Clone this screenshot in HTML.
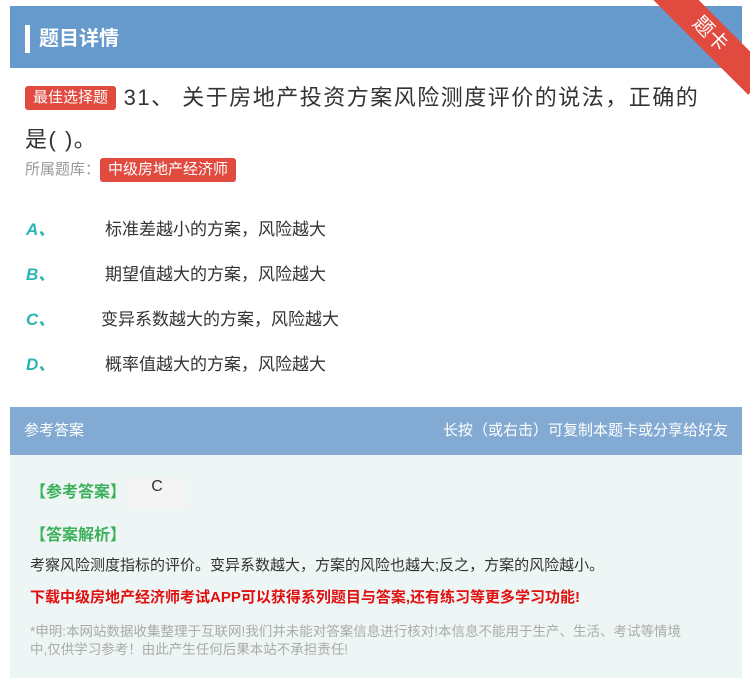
<!DOCTYPE html>
<html><head><meta charset="utf-8"><style>
body{margin:0;width:750px;height:678px;background:#fff;font-family:"Liberation Sans","Noto Sans CJK SC",sans-serif;overflow:hidden;position:relative}
.hdr{position:absolute;left:10px;top:6px;width:732px;height:62px;background:#6699cc}
.hdr .bar{position:absolute;left:15px;top:19px;width:5px;height:28px;background:#fff}
.hdr .t{position:absolute;left:29px;top:16px;color:#fff;font-size:20px;font-weight:bold}
.rib{position:absolute;right:-30px;top:18px;width:140px;height:32px;background:#e04a3f;transform:rotate(45deg);color:#fff;text-align:center;line-height:32px;font-size:20px;transform-origin:center}
.q{position:absolute;left:25px;top:77px;width:720px;font-size:22px;line-height:42px;color:#333;letter-spacing:1.5px;white-space:nowrap}
.tag{display:inline-block;background:#e04a3f;color:#fff;border-radius:3px;font-size:15px;line-height:24px;padding:0 8px;vertical-align:3px;letter-spacing:0}
.lib{position:absolute;left:25px;top:158px;font-size:15px;color:#999}
.opt{position:absolute;left:26px;font-size:17px;color:#333}
.opt b{color:#2ab5b5;font-style:italic;display:inline-block;width:79px}
.ans{position:absolute;left:10px;top:407px;width:732px;height:271px;background:#eef6f5}
.ah{height:48px;background:#82aad3;color:#fff;font-size:15px;line-height:48px;padding:0 14px}
.g{color:#3cb05a;font-size:16px;font-weight:bold}
</style></head><body>
<div class="hdr"><div class="bar"></div><div class="t">题目详情</div></div>
<div class="rib">题卡</div>
<div class="q"><span class="tag">最佳选择题</span> 31、 关于房地产投资方案风险测度评价的说法，正确的<br>是( )。</div>
<div class="lib">所属题库：<span class="tag" style="font-size:15px;vertical-align:0">中级房地产经济师</span></div>
<div class="opt" style="top:215px"><b>A、</b>标准差越小的方案，风险越大</div>
<div class="opt" style="top:260px"><b>B、</b>期望值越大的方案，风险越大</div>
<div class="opt" style="top:305px"><b style="width:75px">C、</b>变异系数越大的方案，风险越大</div>
<div class="opt" style="top:350px"><b>D、</b>概率值越大的方案，风险越大</div>
<div class="ans"><div class="ah">参考答案<span style="float:right">长按（或右击）可复制本题卡或分享给好友</span></div>
<div style="position:absolute;left:20px;top:71px" class="g">【参考答案】<span style="display:inline-block;width:62px;height:30px;background:#f4f4f4;color:#333;font-weight:normal;vertical-align:middle;text-align:center">C</span></div>
<div style="position:absolute;left:20px;top:114px" class="g">【答案解析】</div>
<div style="position:absolute;left:20px;top:147px;font-size:15px;color:#333">考察风险测度指标的评价。变异系数越大，方案的风险也越大;反之，方案的风险越小。</div>
<div style="position:absolute;left:20px;top:179px;font-size:15px;color:#e01010;font-weight:bold">下载中级房地产经济师考试APP可以获得系列题目与答案,还有练习等更多学习功能!</div>
<div style="position:absolute;left:20px;top:216px;width:700px;font-size:13.5px;line-height:18px;color:#aaa;white-space:nowrap">*申明:本网站数据收集整理于互联网!我们并未能对答案信息进行核对!本信息不能用于生产、生活、考试等情境<br>中,仅供学习参考！由此产生任何后果本站不承担责任!</div>
</div>
</body></html>
